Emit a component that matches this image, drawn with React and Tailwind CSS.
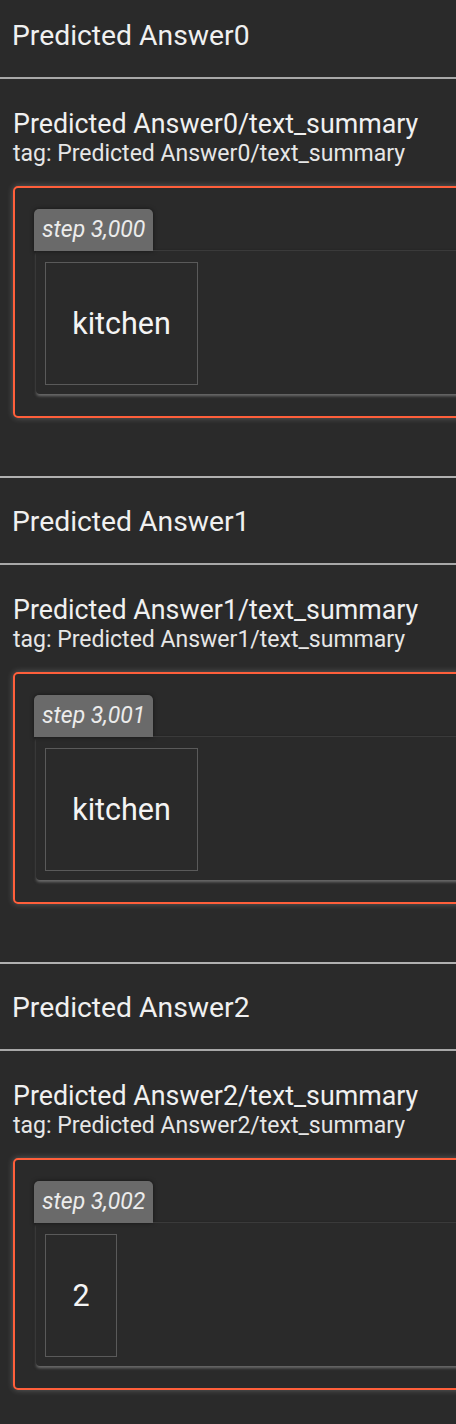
import React from "react";

const items = [
  { n: 0, step: "3,000", text: "kitchen", cellW: "w-[153px]" },
  { n: 1, step: "3,001", text: "kitchen", cellW: "w-[153px]" },
  { n: 2, step: "3,002", text: "2", cellW: "w-[72px]" },
];

function Section({ n, step, text, cellW, last }) {
  return (
    <div className={last ? "" : "h-[486px]"}>
      <div className="h-[476px] flex flex-col">
        <div className="h-[79px] border-b-2 border-[#a8a8a8] pl-[12px] pt-[20px] text-[28.3px] leading-[32px] text-[#f0f0f0]">
          Predicted Answer{n}
        </div>
        <div className="pl-[13px] pt-[29px]">
          <div className="text-[26.8px] leading-[32px] text-[#f0f0f0]">Predicted Answer{n}/text_summary</div>
          <div className="text-[23px] leading-[27px] text-[#e6e6e6]">tag: Predicted Answer{n}/text_summary</div>
          <div className="mt-[19px] w-[480px] h-[232px] rounded-[5px] border-2 border-[#ff5f3b] shadow-[0_0_6px_rgba(255,255,255,0.25)] pl-[19px] pt-[21px]">
            <div className="flex items-end">
              <div className="h-[42px] px-[8px] bg-[#6a6a6a] rounded-t-[5px] flex items-center text-[23px] italic text-[#ececec] shadow-[0_0_4px_rgba(0,0,0,0.5)]">
                step {step}
              </div>
              <div className="flex-1 border-b border-[#3a3a3a]" />
            </div>
            <div className="ml-[2px] h-[143px] rounded-bl-[4px] bg-[#2a2a2a] shadow-[0_2px_3px_rgba(160,160,160,0.6),-1px_0_3px_rgba(0,0,0,0.5)] pl-[9px] pt-[11px]">
              <div className={`${cellW} h-[123px] border border-[#5a5a5a] flex items-center justify-center text-[30.5px] text-[#f4f4f4]`}>
                {text}
              </div>
            </div>
          </div>
        </div>
      </div>
      {!last && <div className="h-[2px] bg-[#b0b0b0]" />}
    </div>
  );
}

export default function App() {
  return (
    <div className="w-[456px] h-[1424px] overflow-hidden bg-[#2a2a2a]" style={{ fontFamily: "Roboto, 'Noto Sans', sans-serif" }}>
      {items.map((it, i) => (
        <Section key={i} {...it} last={i === items.length - 1} />
      ))}
    </div>
  );
}
